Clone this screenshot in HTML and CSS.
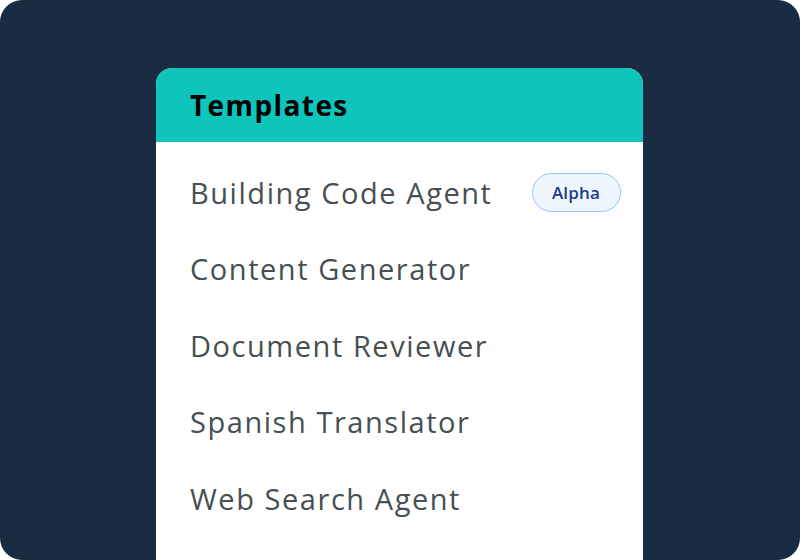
FILE: index.html
```html
<!DOCTYPE html>
<html>
<head>
<meta charset="utf-8">
<link rel="stylesheet" href="styles.css">
</head>
<body>
<div class="frame">
  <div class="card">
    <div class="card-header">Templates</div>
    <ul class="list">
      <li class="item"><span>Building Code Agent</span><span class="badge">Alpha</span></li>
      <li class="item"><span>Content Generator</span></li>
      <li class="item"><span>Document Reviewer</span></li>
      <li class="item"><span>Spanish Translator</span></li>
      <li class="item"><span>Web Search Agent</span></li>
    </ul>
  </div>
</div>
</body>
</html>
```
FILE: styles.css
```css
html, body {
  margin: 0;
  padding: 0;
  background: #ffffff;
}
.frame {
  width: 800px;
  height: 560px;
  background: #1a2c41;
  border-radius: 22px;
  overflow: hidden;
  box-sizing: border-box;
  padding: 68px 0 0 156px;
  display: flex;
}
.card {
  width: 487px;
  background: #ffffff;
  border-radius: 16px 16px 0 0;
  overflow: hidden;
  height: 520px;
}
.card-header {
  background: #0dc5bb;
  height: 74px;
  box-sizing: border-box;
  padding-left: 34px;
  display: flex;
  align-items: center;
  font-family: "Open Sans", sans-serif;
  font-weight: 700;
  font-size: 28px;
  letter-spacing: 1.4px;
  color: #000000;
}
.list {
  list-style: none;
  margin: 0;
  padding: 12px 0 0 34px;
}
.item {
  height: 76.5px;
  display: flex;
  align-items: center;
  font-family: "Open Sans", sans-serif;
  font-weight: 500;
  font-size: 29px;
  letter-spacing: 1.55px;
  color: #464f52;
}
.badge {
  margin-left: 39px;
  width: 89px;
  height: 39px;
  box-sizing: border-box;
  border: 1.5px solid #93c5fd;
  background: #eff6ff;
  border-radius: 20px;
  color: #1e3a8a;
  font-size: 17px;
  font-weight: 600;
  letter-spacing: 0.2px;
  display: flex;
  align-items: center;
  justify-content: center;
}
```
